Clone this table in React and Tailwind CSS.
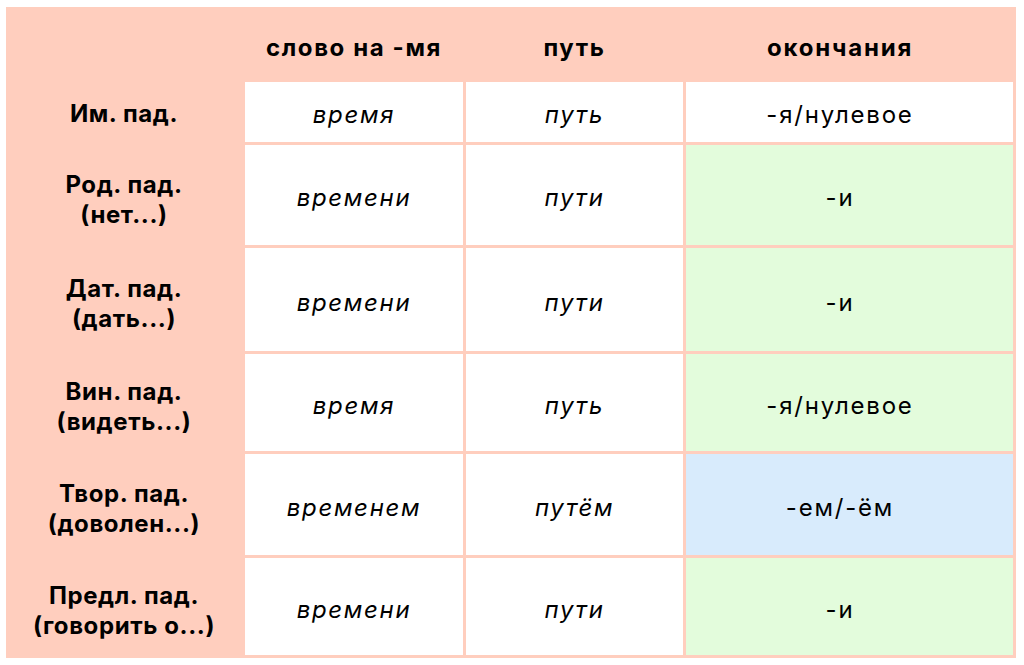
import React from 'react';

const rows = [
  { label: ['Им. пад.'], word: 'время', path: 'путь', ending: '-я/нулевое', tone: 'white' },
  { label: ['Род. пад.', '(нет...)'], word: 'времени', path: 'пути', ending: '-и', tone: 'green' },
  { label: ['Дат. пад.', '(дать...)'], word: 'времени', path: 'пути', ending: '-и', tone: 'green' },
  { label: ['Вин. пад.', '(видеть...)'], word: 'время', path: 'путь', ending: '-я/нулевое', tone: 'green' },
  { label: ['Твор. пад.', '(доволен...)'], word: 'временем', path: 'путём', ending: '-ем/-ём', tone: 'blue' },
  { label: ['Предл. пад.', '(говорить о...)'], word: 'времени', path: 'пути', ending: '-и', tone: 'green' },
];

const tones = {
  white: 'bg-white',
  green: 'bg-[#e3fcdc]',
  blue: 'bg-[#d8ebfc]',
};

export default function App() {
  return (
    <div className="w-[1024px] h-[665px] bg-white pt-[7px] pl-[6px] font-['Inter','Liberation_Sans',sans-serif] text-black">
      <div className="w-[1010px] h-[651px] bg-[#ffcebe] pr-[3px] pb-[3px] grid grid-cols-[236px_218px_217px_327px] grid-rows-[72px_60px_100px_103px_97px_101px_97px] gap-[3px]">
        {/* Header */}
        <div />
        <div className="flex items-center justify-center pt-[9px] text-[24px] font-bold tracking-[1.6px]">слово на -мя</div>
        <div className="flex items-center justify-center pt-[9px] text-[24px] font-bold tracking-[1.6px]">путь</div>
        <div className="flex items-center justify-center pt-[9px] pr-[19px] text-[24px] font-bold tracking-[1.8px]">окончания</div>

        {rows.map((r, i) => (
          <React.Fragment key={i}>
            <div
              className={`flex flex-col items-center justify-center text-[24px] font-bold leading-[30px] tracking-[0.6px] text-center ${
                r.label.length > 1 ? 'pt-[9px]' : 'pt-[4px]'
              }`}
            >
              {r.label.map((l) => (
                <span key={l}>{l}</span>
              ))}
            </div>
            <div className="bg-white flex items-center justify-center pt-[6px] text-[24px] italic tracking-[1.7px]">{r.word}</div>
            <div className="bg-white flex items-center justify-center pt-[6px] text-[24px] italic tracking-[1.7px]">{r.path}</div>
            <div className={`${tones[r.tone]} flex items-center justify-center pt-[6px] pr-[19px] text-[24px] tracking-[1.8px]`}>
              {r.ending}
            </div>
          </React.Fragment>
        ))}
      </div>
    </div>
  );
}
